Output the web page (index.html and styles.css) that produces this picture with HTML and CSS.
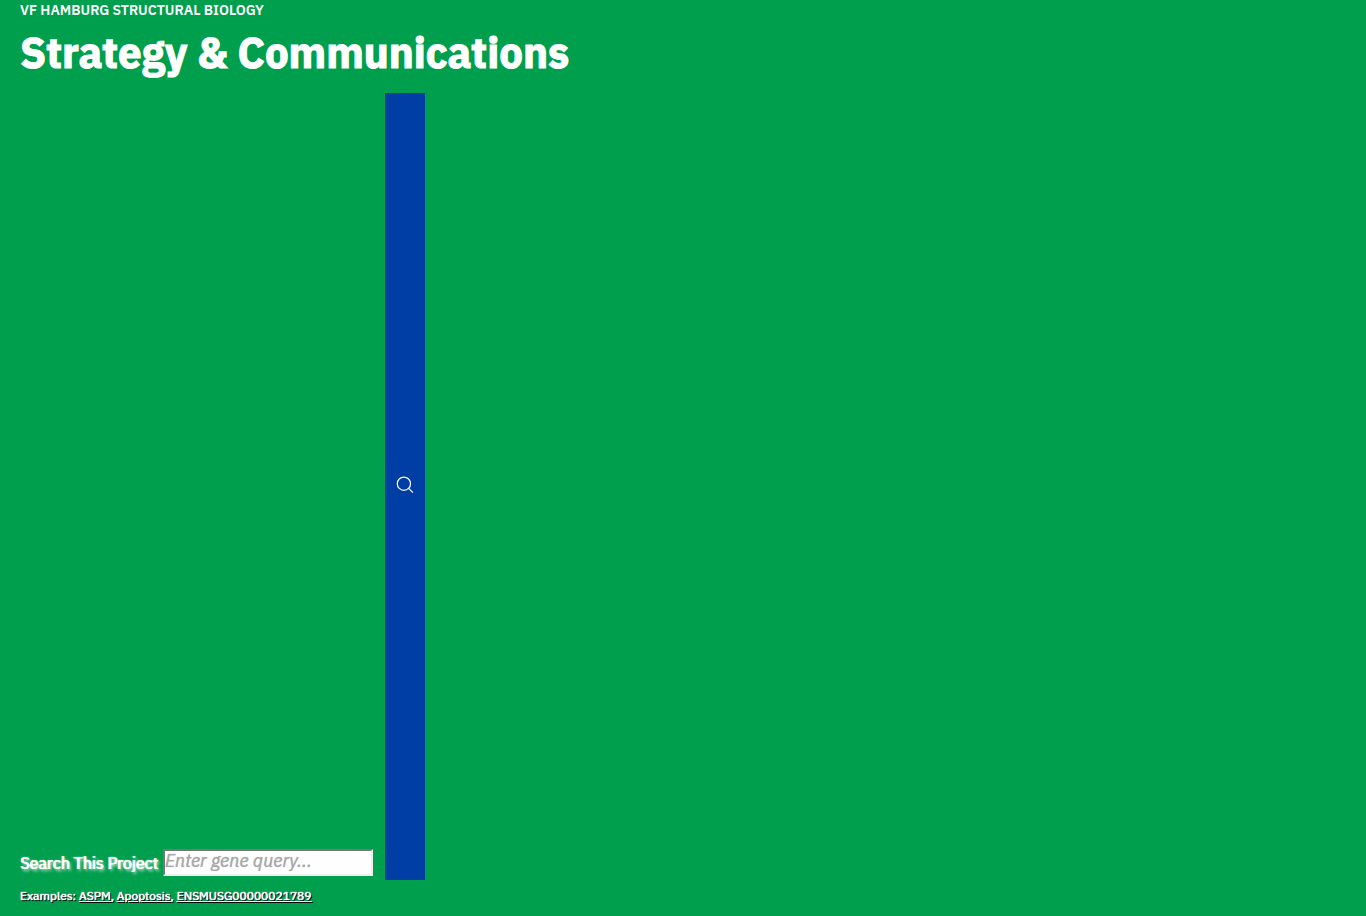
FILE: index.html
```html
<!DOCTYPE html>
<html lang="en">
<head>
<meta charset="utf-8">
<title>Strategy &amp; Communications</title>
<link rel="stylesheet" href="styles.css">
</head>
<body>
<header class="intro">
  <p class="kicker">VF Hamburg Structural Biology</p>
  <h1 class="title">Strategy &amp; Communications</h1>
</header>
<form class="search">
  <div class="field">
    <label class="label" for="query">Search This Project</label>
    <input class="query" id="query" type="text" placeholder="Enter gene query...">
  </div>
  <button class="submit" type="button" aria-label="Search">
    <svg class="icon" viewBox="0 0 18 18"><circle cx="7.9" cy="7.7" r="6.6"/><path d="M12.6 12.4 17 16.6"/></svg>
  </button>
</form>
<p class="examples">Examples: <a href="#">ASPM</a>, <a href="#">Apoptosis</a>, <a href="#">ENSMUSG00000021789</a></p>
</body>
</html>
```
FILE: styles.css
```css
* { box-sizing: border-box; }
body {
  margin: 0;
  min-height: 100vh;
  padding: 0 20px;
  display: flex;
  flex-direction: column;
  background: #009f4d;
  color: #fff;
  font-family: "IBM Plex Sans", Inter, "Open Sans", sans-serif;
}
.kicker {
  margin: 0;
  font-size: 14px;
  line-height: 20px;
  font-weight: 600;
  text-transform: uppercase;
}
.title {
  margin: 6px 0 13px;
  font-size: 42px;
  line-height: 54px;
  font-weight: 700;
  -webkit-text-stroke: 1px #fff;
}
.search { flex: 1; display: flex; gap: 12px; }
.field { display: flex; align-items: center; align-self: flex-end; gap: 5px; margin-bottom: 4px; }
.label {
  font-size: 16px;
  font-weight: 400;
  text-shadow: 0 0 1px #fff, 1px 0 0 #fff, 2px 2px 3px rgba(255, 255, 255, .9);
}
.query {
  width: 210px;
  height: 27px;
  padding: 0 0 4px;
  border: 2px solid;
  border-color: #767676 #eee #eee #767676;
  background: #fff;
  font: italic 400 18px/20px "IBM Plex Sans", Inter, "Open Sans", sans-serif;
}
.query::placeholder { color: #a8a8a8; opacity: 1; text-shadow: 0 0 1px #a8a8a8; }
.submit {
  width: 40px;
  padding: 0 0 4px;
  border: 0;
  background: #003da5;
  display: flex;
  align-items: center;
  justify-content: center;
}
.icon { width: 18px; height: 18px; fill: none; stroke: #fff; stroke-width: 1.2; }
.examples {
  margin: 6px 0 10px;
  font-size: 12px;
  line-height: 20px;
  font-weight: 400;
  text-shadow: 0 0 1px #fff, 0 0 1px #fff, 1px 1px 0 #000, 1px 1px 1px #000;
}
.examples a { color: inherit; }
```
